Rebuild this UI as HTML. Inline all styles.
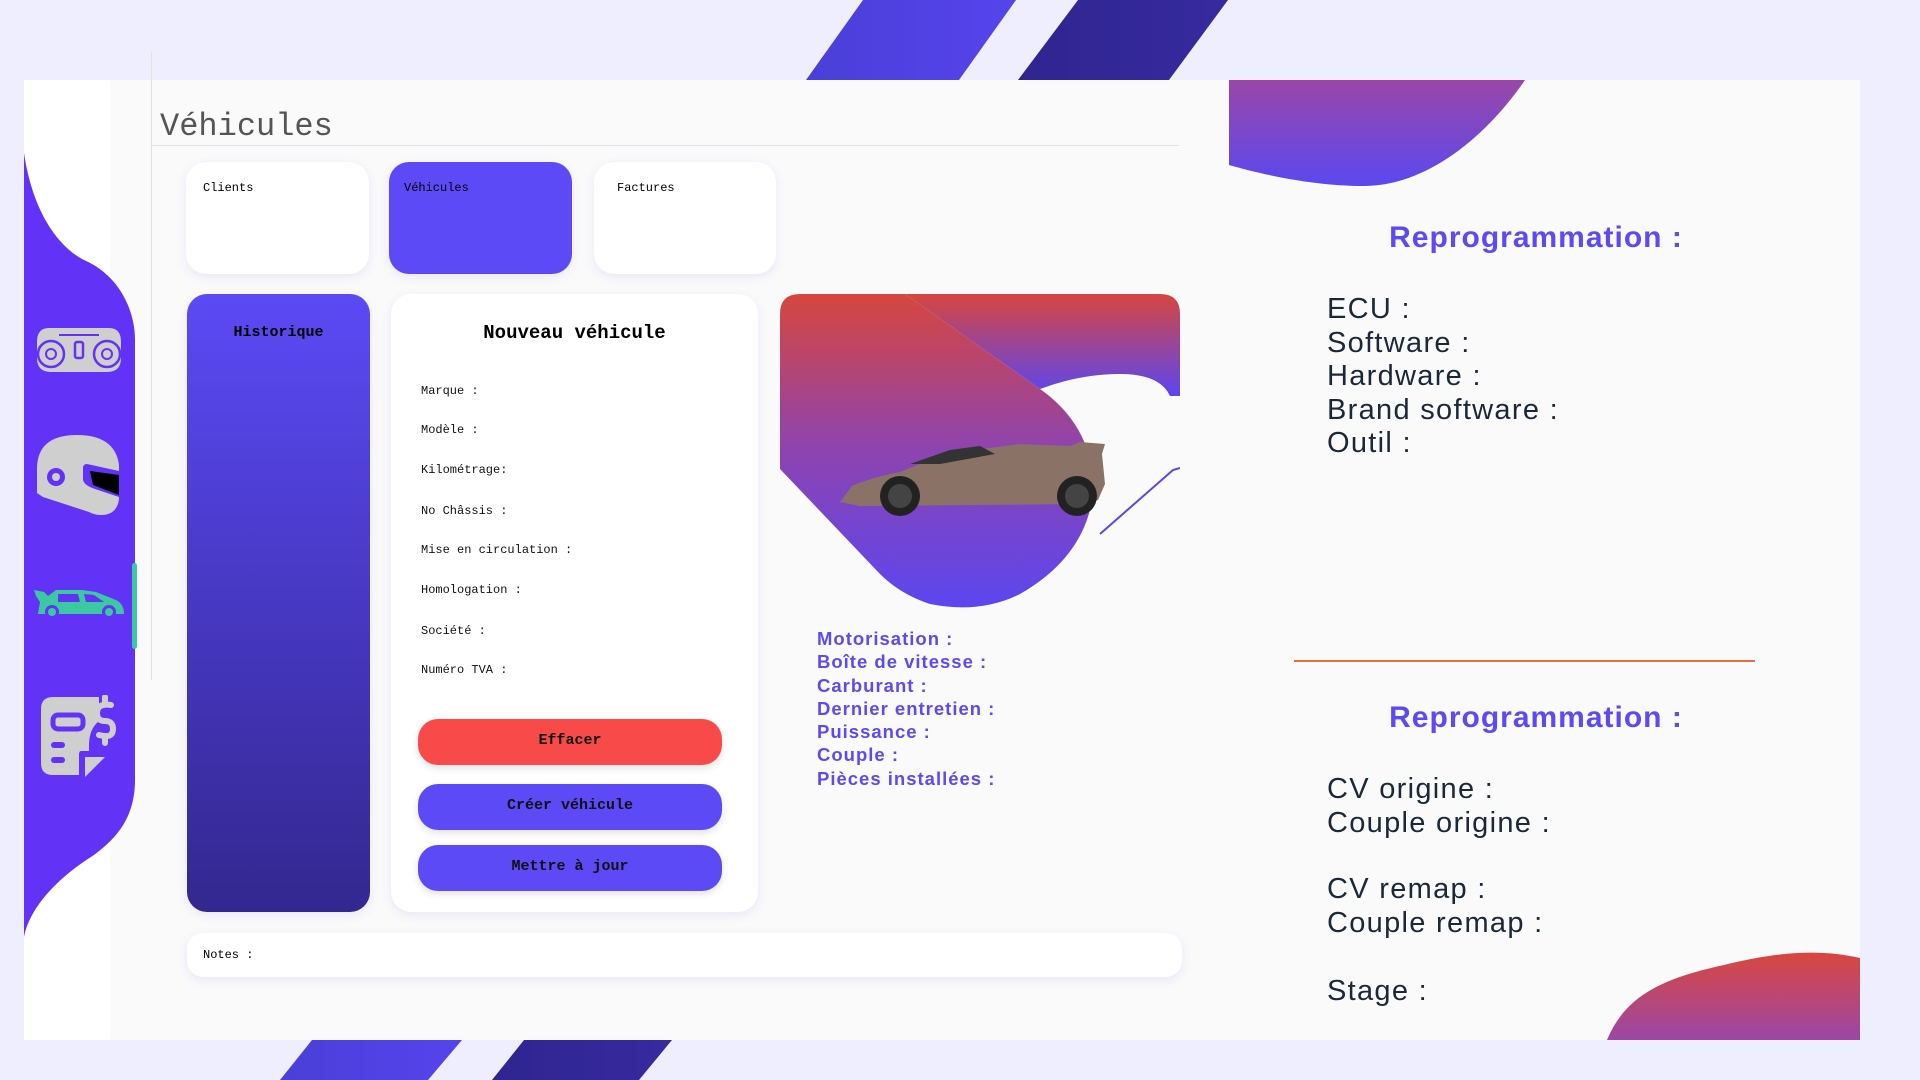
<!DOCTYPE html>
<html><head><meta charset="utf-8"><style>
*{margin:0;padding:0;box-sizing:border-box}
body{width:1920px;height:1080px;background:#efeefe;position:relative;overflow:hidden;font-family:"Liberation Mono",monospace}
.a{position:absolute}
.card{position:absolute;background:#fff;border-radius:20px;box-shadow:0 3px 10px rgba(110,90,240,.12)}
.lbl{position:absolute;left:30px;font-size:12px;color:#111}
.btn{position:absolute;left:27px;width:304px;height:46px;border-radius:20px;background:#5b4af5;font-size:15px;font-weight:bold;text-align:center;line-height:44px;color:#111;box-shadow:0 3px 8px rgba(0,0,0,.12)}
.blue{position:absolute;left:817px;font-family:"Liberation Sans",sans-serif;font-weight:bold;font-size:18.5px;letter-spacing:1px;color:#5b4af5;line-height:23.3px}
.rp{position:absolute;left:1294px;width:484px;text-align:center;font-family:"Liberation Sans",sans-serif;font-weight:bold;font-size:30px;letter-spacing:1px;color:#5b4af5}
.dk{position:absolute;left:1327px;font-family:"Liberation Sans",sans-serif;font-size:29px;letter-spacing:1.3px;color:#1b2838;line-height:33.5px}
</style></head><body>
<svg class="a" style="left:0;top:0" width="1920" height="1080">
<defs>
<linearGradient id="s1" x1="0" y1="0" x2="1" y2="0"><stop offset="0" stop-color="#4a3fd8"/><stop offset="1" stop-color="#5544ec"/></linearGradient>
<linearGradient id="s2" x1="0" y1="0" x2="1" y2="0"><stop offset="0" stop-color="#2f2590"/><stop offset="1" stop-color="#362a9f"/></linearGradient>
</defs>
<polygon points="806,80 863,0 1016,0 959,80" fill="url(#s1)"/>
<polygon points="1018,80 1078,0 1228,0 1169,80" fill="url(#s2)"/>
<polygon points="280,1080 312,1040 462,1040 428,1080" fill="url(#s1)"/>
<polygon points="492,1080 524,1040 672,1040 639,1080" fill="url(#s2)"/>
</svg>
<div class="a" style="left:24px;top:80px;width:1836px;height:960px;background:#fafafa"></div>
<div class="a" style="left:24px;top:80px;width:86px;height:960px;background:#fff"></div>
<svg class="a" style="left:24px;top:80px" width="1836" height="960">
<defs>
<linearGradient id="tb" x1="0" y1="0" x2="0" y2="1"><stop offset="0" stop-color="#9a47a6"/><stop offset="1" stop-color="#5b48f0"/></linearGradient>
<linearGradient id="bb" x1="0" y1="0" x2="0" y2="1"><stop offset="0" stop-color="#d9473e"/><stop offset="1" stop-color="#9a47a6"/></linearGradient>
</defs>
<path d="M0,73 C10,140 40,170 60,180 C95,195 111,230 111,260 L111,700 C111,740 90,760 70,775 C30,800 5,830 0,857 Z" fill="#6233f6"/>
<rect x="108" y="483" width="5" height="86" rx="2.5" fill="#3ac9a0"/>
<path d="M1205,0 L1501,0 C1460,60 1400,106 1340,106 C1290,106 1240,95 1205,85 Z" fill="url(#tb)"/>
<path d="M1583,960 C1600,920 1630,900 1700,885 C1760,870 1800,870 1836,878 L1836,960 Z" fill="url(#bb)"/>
<line x1="1270" y1="581" x2="1731" y2="581" stroke="#e8703a" stroke-width="2"/>
</svg>
<svg class="a" style="left:37px;top:328px" width="84" height="44" viewBox="0 0 84 44">
<path d="M12,0 H72 Q84,0 84,14 V30 Q84,44 70,44 H14 Q0,44 0,30 V14 Q0,0 12,0Z" fill="#cfcfcf"/>
<circle cx="14" cy="26" r="13" fill="none" stroke="#6233f6" stroke-width="2.5"/><circle cx="14" cy="26" r="5" fill="none" stroke="#6233f6" stroke-width="2"/>
<circle cx="70" cy="26" r="13" fill="none" stroke="#6233f6" stroke-width="2.5"/><circle cx="70" cy="26" r="5" fill="none" stroke="#6233f6" stroke-width="2"/>
<rect x="38" y="14" width="8" height="16" rx="2" fill="none" stroke="#6233f6" stroke-width="2.5"/>
<path d="M22,7 H62" stroke="#6233f6" stroke-width="2"/>
</svg>
<svg class="a" style="left:37px;top:435px" width="82" height="80" viewBox="0 0 82 80">
<path d="M0,58 V34 Q0,0 40,0 Q78,0 82,30 V64 Q80,80 64,80 Q58,80 52,77 L6,62 Z" fill="#cfcfcf"/>
<circle cx="19" cy="42" r="9" fill="#6233f6"/><circle cx="19" cy="42" r="4" fill="#cfcfcf"/>
<path d="M46,33 Q46,29 50,29 L82,36 V62 L58,54 Q46,50 46,44Z" fill="#6233f6"/>
<path d="M53,36 L82,40 V60 L56,50Z" fill="#000"/>
</svg>
<svg class="a" style="left:34px;top:588px" width="92" height="32" viewBox="0 0 92 32">
<path d="M0,2 L10,4 L14,8 L22,2 H48 L62,4 L82,12 Q90,16 90,26 H4 L6,14 L2,8Z" fill="#3ac9a0"/>
<path d="M24,6 H44 L46,14 H24Z M50,6 L60,7 L70,14 H52Z" fill="#6233f6"/>
<circle cx="18" cy="24" r="7" fill="#6233f6"/><circle cx="18" cy="24" r="4" fill="#3ac9a0"/>
<circle cx="75" cy="24" r="7" fill="#6233f6"/><circle cx="75" cy="24" r="4" fill="#3ac9a0"/>
</svg>
<svg class="a" style="left:39px;top:695px" width="82" height="82" viewBox="0 0 82 82">
<path d="M14,2 H60 V26 Q50,34 50,50 V56 H42 Q40,56 40,60 V80 H14 Q2,80 2,68 V14 Q2,2 14,2Z" fill="#cfcfcf"/>
<path d="M46,82 V62 H66Z" fill="#cfcfcf"/>
<rect x="14" y="20" width="30" height="14" rx="5" fill="none" stroke="#6233f6" stroke-width="5"/>
<rect x="12" y="47" width="14" height="6" rx="3" fill="#6233f6"/><rect x="12" y="62" width="14" height="6" rx="3" fill="#6233f6"/>
<path d="M72,10 Q58,8 58,18 Q58,26 66,26 Q74,26 74,34 Q74,44 60,40 M66,2 V8 M66,42 V48" fill="none" stroke="#cfcfcf" stroke-width="6" stroke-linecap="round"/>
</svg>
<div class="a" style="left:151px;top:52px;width:1px;height:628px;background:#e2e2e2"></div>
<div class="a" style="left:151px;top:145px;width:1028px;height:1px;background:#e2e2e2"></div>
<div class="a" style="left:160px;top:108px;font-size:32px;color:#555">Véhicules</div>
<div class="card" style="left:186px;top:162px;width:183px;height:112px"><div class="a" style="left:17px;top:19px;font-size:12px">Clients</div></div>
<div class="card" style="left:389px;top:162px;width:183px;height:112px;background:#5b4af5"><div class="a" style="left:15px;top:19px;font-size:12px">Véhicules</div></div>
<div class="card" style="left:594px;top:162px;width:182px;height:112px"><div class="a" style="left:23px;top:19px;font-size:12px">Factures</div></div>
<div class="card" style="left:187px;top:294px;width:183px;height:618px;background:linear-gradient(#5b4af5,#33278f)"><div class="a" style="left:0;width:183px;text-align:center;top:30px;font-size:15px;font-weight:bold">Historique</div></div>
<div class="card" style="left:391px;top:294px;width:367px;height:618px">
<div class="a" style="left:0;width:367px;text-align:center;top:28px;font-size:19px;font-weight:bold">Nouveau véhicule</div>
<div class="lbl" style="top:90px">Marque :</div>
<div class="lbl" style="top:129px">Modèle :</div>
<div class="lbl" style="top:169px">Kilométrage:</div>
<div class="lbl" style="top:210px">No Châssis :</div>
<div class="lbl" style="top:249px">Mise en circulation :</div>
<div class="lbl" style="top:289px">Homologation :</div>
<div class="lbl" style="top:330px">Société :</div>
<div class="lbl" style="top:369px">Numéro TVA :</div>
<div class="btn" style="top:425px;background:#f94a4a">Effacer</div>
<div class="btn" style="top:490px">Créer véhicule</div>
<div class="btn" style="top:551px">Mettre à jour</div>
</div>
<div class="card" style="left:187px;top:933px;width:995px;height:44px;border-radius:16px"><div class="a" style="left:16px;top:15px;font-size:12px">Notes :</div></div>
<svg class="a" style="left:780px;top:294px" width="400" height="320" viewBox="0 0 400 320">
<defs>
<linearGradient id="cg" x1="0" y1="0" x2="0" y2="1"><stop offset="0" stop-color="#d6463e"/><stop offset=".5" stop-color="#8d44b0"/><stop offset="1" stop-color="#5b46f0"/></linearGradient>
<linearGradient id="cg2" x1="0" y1="0" x2="0" y2="1"><stop offset="0" stop-color="#d6463e"/><stop offset="1" stop-color="#5b46f0"/></linearGradient>
</defs>
<path d="M20,0 H380 Q400,0 400,20 V102 L390,102 Q380,80 340,80 Q300,80 260,95 L125,0Z" fill="url(#cg2)"/>
<path d="M20,0 H125 L260,95 Q310,130 314,190 Q310,260 240,300 Q200,320 150,310 Q120,300 100,280 L0,175 V20 Q0,0 20,0Z" fill="url(#cg)"/>
<path d="M320,240 L393,176 L400,174" fill="none" stroke="#5b46f0" stroke-width="2"/>
<path d="M60,208 L72,192 Q90,184 120,178 L165,160 L240,150 L290,152 L300,148 L325,150 L322,160 L325,190 L318,206 L300,210 L80,212Z" fill="#8a7366"/>
<path d="M130,170 L170,156 L200,152 L215,160 L160,170Z" fill="#333"/>
<circle cx="120" cy="202" r="20" fill="#222"/><circle cx="120" cy="202" r="12" fill="#444"/>
<circle cx="297" cy="202" r="20" fill="#222"/><circle cx="297" cy="202" r="12" fill="#444"/>
</svg>
<div class="blue" style="top:627px">Motorisation :<br>Boîte de vitesse :<br>Carburant :<br>Dernier entretien :<br>Puissance :<br>Couple :<br>Pièces installées :</div>
<div class="rp" style="top:221px">Reprogrammation :</div>
<div class="dk" style="top:293px">ECU :<br>Software :<br>Hardware :<br>Brand software :<br>Outil :</div>
<div class="rp" style="top:701px">Reprogrammation :</div>
<div class="dk" style="top:773px">CV origine :<br>Couple origine :</div>
<div class="dk" style="top:873px">CV remap :<br>Couple remap :</div>
<div class="dk" style="top:975px">Stage :</div>
</body></html>
